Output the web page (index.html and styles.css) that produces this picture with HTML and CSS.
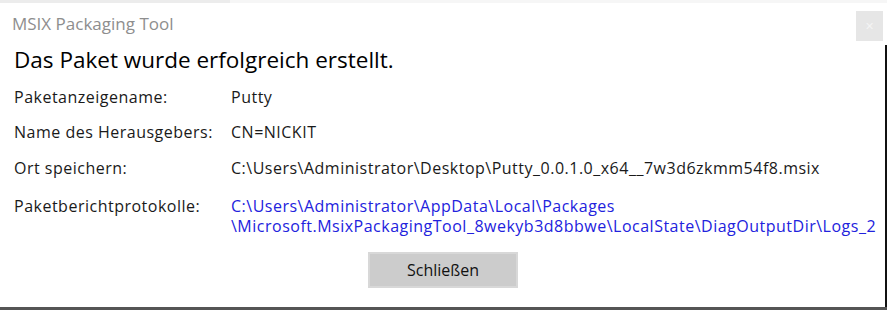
FILE: index.html
```html
<!DOCTYPE html>
<html>
<head>
	<title>MSIX Packaging Tool</title>
	<link rel="stylesheet" href="styles.css">
</head>
<body>
	<div class="window">
		<div class="top-strip"></div>
		<!-- Titelleiste -->
		<div class="titlebar">
			<span class="app-name">MSIX Packaging Tool</span>
			<div class="close-btn">&#x2715;</div>
		</div>
		<div class="content">
			<h1 class="headline">Das Paket wurde erfolgreich erstellt.</h1>
			<div class="info">
				<div class="row">
					<div class="label">Paketanzeigename:</div>
					<div class="value">Putty</div>
				</div>
				<div class="row">
					<div class="label">Name des Herausgebers:</div>
					<div class="value">CN=NICKIT</div>
				</div>
				<div class="row">
					<div class="label">Ort speichern:</div>
					<div class="value">C:\Users\Administrator\Desktop\Putty_0.0.1.0_x64__7w3d6zkmm54f8.msix</div>
				</div>
				<div class="row row-logs">
					<div class="label">Paketberichtprotokolle:</div>
					<a class="value link">C:\Users\Administrator\AppData\Local\Packages<br>\Microsoft.MsixPackagingTool_8wekyb3d8bbwe\LocalState\DiagOutputDir\Logs_2</a>
				</div>
			</div>
			<div class="bottom">
				<a class="btn">Schließen</a>
			</div>
		</div>
	</div>
</body>
</html>
```

FILE: styles.css
```css
*{
	margin: 0;
	padding: 0;
	box-sizing: border-box;
}
body{
	background: #fff;
	font-family: "Open Sans", "Noto Sans", sans-serif;
	color: #1a1a1a;
}
.window{
	position: relative;
	width: 887px;
	height: 310px;
	border-bottom: 3px solid #555;
	overflow: hidden;
}
.top-strip{
	height: 3px;
	background: linear-gradient(to right, #ececec 0, #ececec 230px, #f6f6f6 230px);
}
.titlebar{
	display: flex;
	align-items: center;
	justify-content: space-between;
	height: 42px;
	padding-left: 12px;
	padding-right: 4px;
}
.app-name{
	font-size: 17px;
	color: #8e8e8e;
	margin-top: -1px;
}
.close-btn{
	width: 27px;
	height: 30px;
	background: #e6e6e6;
	color: #f4f4f4;
	font-size: 11px;
	text-align: center;
	line-height: 30px;
	margin-top: 4px;
}
.content{
	height: 262px;
	padding: 0 0 0 14px;
	border-right: 2px solid #111;
}
.headline{
	font-size: 22.5px;
	font-weight: normal;
	color: #000;
	line-height: 30px;
	margin-bottom: 12px;
}
.row{
	display: grid;
	grid-template-columns: 217px 1fr;
	font-size: 16px;
	letter-spacing: 0.5px;
	line-height: 20px;
	margin-bottom: 15px;
}
.row:nth-child(2){
	margin-bottom: 16px;
}
.row:nth-child(3){
	margin-bottom: 18px;
}
.row-logs{
	margin-bottom: 16px;
}
.link{
	color: #2222dd;
}
.bottom{
	display: flex;
	justify-content: flex-start;
	padding-left: 354px;
}
.bottom .btn{
	display: inline-block;
	width: 150px;
	height: 36px;
	line-height: 32px;
	text-align: center;
	background: #cccccc;
	border: 2px solid #d8d8d8;
	font-size: 16px;
	color: #111;
}
```
